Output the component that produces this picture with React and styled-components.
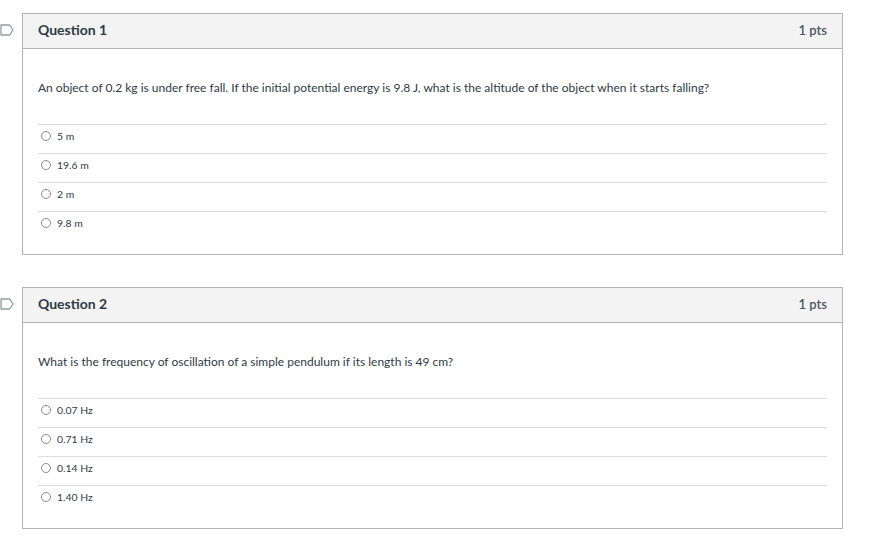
import React from 'react';
import styled, { createGlobalStyle } from 'styled-components';

const GlobalStyle = createGlobalStyle`
  body {
    margin: 0;
    background: #ffffff;
    font-family: Lato, "Open Sans", "Liberation Sans", sans-serif;
    color: #2d3b45;
  }
`;

const Page = styled.div`
  padding: 13px 0 20px 0;
  width: 876px;
  display: flex;
  flex-direction: column;
  gap: 32px;
`;

const QuestionRow = styled.div`
  display: flex;
  align-items: flex-start;
`;

const FlagCol = styled.div`
  width: 22px;
  flex: 0 0 22px;
  padding-top: 10px;
  display: flex;
`;

const Card = styled.div`
  width: 819px;
  border: 1px solid #b4b4b4;
  background: #fff;
`;

const Header = styled.div`
  height: 35px;
  background: #f3f3f3;
  border-bottom: 1px solid #b4b4b4;
  display: flex;
  align-items: center;
  justify-content: space-between;
  padding: 0 15px 3px 15px;
  box-sizing: border-box;
`;

const Title = styled.h2`
  margin: 0;
  font-size: 14px;
  line-height: 16px;
  font-weight: 700;
  color: #2d3b45;
`;

const Points = styled.span`
  font-size: 13px;
  line-height: 16px;
  font-weight: 600;
  color: #4a5661;
`;

const Body = styled.div`
  padding: 30px 15px 14px 15px;
`;

const QuestionText = styled.p`
  margin: 0 0 27px 0;
  font-size: 12px;
  line-height: 18px;
  color: #2d3b45;
`;

const Answer = styled.label`
  display: flex;
  align-items: center;
  box-sizing: content-box;
  height: 22px;
  padding: 0 0 6px 3px;
  border-top: 1px solid #dcdcdc;
  font-size: 10.4px;
  color: #2d3b45;
`;

const Radio = styled.span`
  width: 8px;
  height: 8px;
  border: 1px solid #8b8b8b;
  border-radius: 50%;
  margin-right: 6px;
  flex: none;
`;

const Flag = () => (
  <svg width="14" height="14" viewBox="0 0 14 14" fill="none">
    <path d="M1 2 H9 Q9.6 2 10 2.5 L13 7 L10 11.5 Q9.6 12 9 12 H1 Z" stroke="#8d9ba6" strokeWidth="1.3" strokeLinejoin="round" />
  </svg>
);

const questions = [
  {
    title: 'Question 1',
    text: 'An object of 0.2 kg is under free fall. If the initial potential energy is 9.8 J, what is the altitude of the object when it starts falling?',
    answers: ['5 m', '19.6 m', '2 m', '9.8 m'],
  },
  {
    title: 'Question 2',
    text: 'What is the frequency of oscillation of a simple pendulum if its length is 49 cm?',
    answers: ['0.07 Hz', '0.71 Hz', '0.14 Hz', '1.40 Hz'],
  },
];

const App = () => (
  <>
    <GlobalStyle />
    <Page>
      {questions.map(q => (
        <QuestionRow key={q.title}>
          <FlagCol><Flag /></FlagCol>
          <Card>
            <Header>
              <Title>{q.title}</Title>
              <Points>1 pts</Points>
            </Header>
            <Body>
              <QuestionText>{q.text}</QuestionText>
              {q.answers.map(a => (
                <Answer key={a}>
                  <Radio />
                  {a}
                </Answer>
              ))}
            </Body>
          </Card>
        </QuestionRow>
      ))}
    </Page>
  </>
);

export default App;
